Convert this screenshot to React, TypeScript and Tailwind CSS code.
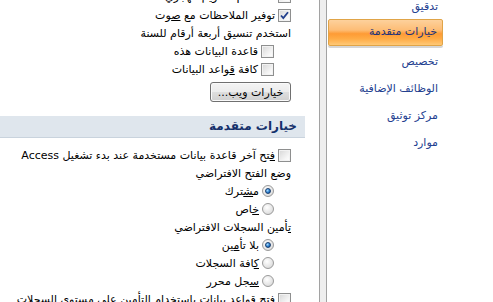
import React from "react";

const font = { fontFamily: '"DejaVu Sans", Tahoma, sans-serif' };

function CheckBox({ checked = false }: { checked?: boolean }) {
  return (
    <span className="w-[13px] h-[13px] shrink-0 border border-[#8e8f8f] bg-[linear-gradient(135deg,#d6d6d6,#f6f6f6_70%,#ffffff)] shadow-[inset_0_0_0_1px_#f2f2f2] flex items-center justify-center">
      {checked && (
        <svg width="9" height="9" viewBox="0 0 9 9">
          <path d="M1 4.5 L3.3 7 L8 1.2" fill="none" stroke="#213f8c" strokeWidth="1.8" />
        </svg>
      )}
    </span>
  );
}

function Radio({ checked = false }: { checked?: boolean }) {
  return (
    <span className="w-[12px] h-[12px] shrink-0 rounded-full border border-[#9a9a9a] bg-[radial-gradient(circle_at_40%_35%,#ffffff,#e4e4e4_60%,#cfcfcf)] flex items-center justify-center">
      {checked && (
        <span className="w-[6px] h-[6px] rounded-full border border-[#1b3f6e] bg-[radial-gradient(circle_at_35%_35%,#a8dcff,#2a7fd0_55%,#0b3f80)]" />
      )}
    </span>
  );
}

function Row({ children, indent = false }: { children: React.ReactNode; indent?: boolean }) {
  return (
    <div className={`flex items-center h-[18px] gap-[3px] leading-none whitespace-nowrap ${indent ? "pr-[17px]" : ""}`}>
      {children}
    </div>
  );
}

function NavItem({ children, selected = false, cls = "" }: { children: React.ReactNode; selected?: boolean; cls?: string }) {
  if (selected) {
    return (
      <div className={`h-[27px] flex items-center pr-[5px] border border-[#e0a447] rounded-[2px] bg-[linear-gradient(to_bottom,#fdd19c_0%,#fdbd76_40%,#fe9b35_55%,#ffab45_75%,#ffc977_100%)] shadow-[0_2px_0_#d6d6d6] text-[#22347c] whitespace-nowrap ${cls}`}>
        {children}
      </div>
    );
  }
  return (
    <div className={`h-[27px] flex items-center pr-[5px] text-[#23408f] whitespace-nowrap ${cls}`}>
      {children}
    </div>
  );
}

export default function App() {
  return (
    <div dir="rtl" style={font} className="w-[493px] h-[302px] overflow-hidden flex flex-row bg-white text-[11px] text-black">
      {/* Navigation panel (right) */}
      <div className="w-[166px] h-full shrink-0 bg-white pr-[50px] pl-[1px] flex flex-col">
        <NavItem cls="!h-[24px] mt-[-5px]">تدقيق</NavItem>
        <NavItem selected>خيارات متقدمة</NavItem>
        <NavItem cls="mt-[3px]">تخصيص</NavItem>
        <NavItem>الوظائف الإضافية</NavItem>
        <NavItem>مركز توثيق</NavItem>
        <NavItem>موارد</NavItem>
      </div>

      {/* Splitter */}
      <div className="w-[8px] h-full shrink-0 border-x border-[#a2a2a2] bg-[#eeeeee]" />

      {/* Content panel (left) */}
      <div className="w-[319px] h-full shrink-0 overflow-hidden bg-white">
        <div className="pr-[28px] mt-[-13px] flex flex-col">
          <Row>
            <CheckBox />
            <span>استخدام التقويم الهجري</span>
          </Row>
          <div className="h-[1px]" />
          <Row>
            <CheckBox checked />
            <span>توفير الملاحظات مع <u>ص</u>وت</span>
          </Row>
          <Row>
            <span>استخدم تنسيق أربعة أرقام للسنة</span>
          </Row>
          <Row indent>
            <CheckBox />
            <span>قاعدة البيانات هذه</span>
          </Row>
          <Row indent>
            <CheckBox />
            <span>كافة <u>ق</u>واعد البيانات</span>
          </Row>
          <div className="flex mt-[4px]">
            <button className="w-[81px] h-[20px] rounded-[3px] border border-[#707070] bg-[linear-gradient(to_bottom,#f4f4f4_0%,#ececec_50%,#dedede_51%,#d0d0d0_100%)] shadow-[inset_0_0_0_1px_#fafafa] text-[11px] leading-none flex items-center justify-center text-black">
              خيارات ويب...
            </button>
          </div>
        </div>

        <div className="mt-[14px] mr-[14px] h-[22px] bg-[#dfe6ed] border-b border-[#c9d3dd] pr-[8px] text-right leading-[21px] text-[12px] font-bold text-[#15306b] whitespace-nowrap">
          خيارات متقدمة
        </div>

        <div className="pr-[28px] mt-[8px] flex flex-col">
          <Row>
            <CheckBox />
            <span><u>ف</u>تح آخر قاعدة بيانات مستخدمة عند بدء تشغيل Access</span>
          </Row>
          <Row>
            <span>وضع الفتح الافتراضي</span>
          </Row>
          <Row indent>
            <Radio checked />
            <span>م<u>ش</u>ترك</span>
          </Row>
          <Row indent>
            <Radio />
            <span><u>خ</u>اص</span>
          </Row>
          <Row>
            <span><u>ت</u>أمين السجلات الافتراضي</span>
          </Row>
          <Row indent>
            <Radio checked />
            <span>بلا تأ<u>م</u>ين</span>
          </Row>
          <Row indent>
            <Radio />
            <span><u>ك</u>افة السجلات</span>
          </Row>
          <Row indent>
            <Radio />
            <span><u>س</u>جل محرر</span>
          </Row>
          <Row>
            <CheckBox />
            <span>فتح قواعد بيانات باستخدام التأمين على مستوى السجلات</span>
          </Row>
        </div>
      </div>
    </div>
  );
}
